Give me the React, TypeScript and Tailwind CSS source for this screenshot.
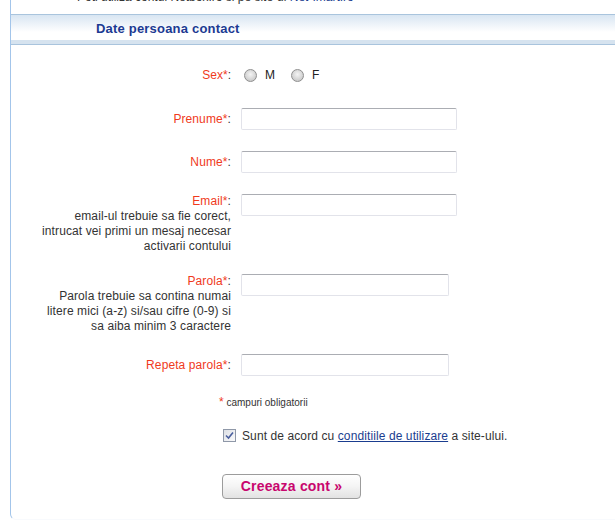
type FieldProps = {
  label: string;
  help?: string[];
  width: string;
};

function Req({ label }: { label: string }) {
  return (
    <span>
      <span className="text-[#f03a1c]">{label}*</span>
      <span className="text-[#333]">:</span>
    </span>
  );
}

function TextRow({ label, help, width }: FieldProps) {
  return (
    <div className={`flex ${help ? "items-start" : "items-center"}`}>
      <div className="w-[200px] shrink-0 text-right leading-[15px] tracking-[0.1px] text-[#333]">
        <div>
          <Req label={label} />
        </div>
        {help?.map((line) => (
          <div key={line}>{line}</div>
        ))}
      </div>
      <input
        type="text"
        className={`ml-[10px] h-[22px] ${width} rounded-[2px] border border-[#e2e3ea] border-t-[#abadb3] bg-white outline-none`}
      />
    </div>
  );
}

function Radio({ label }: { label: string }) {
  return (
    <label className="flex items-center">
      <span className="h-[13px] w-[13px] rounded-full border border-[#8f8f8f] bg-[radial-gradient(circle_at_50%_40%,#f4f4f4_0%,#d6d6d6_55%,#bdbdbd_100%)]" />
      <span className="ml-[8px] text-[#222]">{label}</span>
    </label>
  );
}

export default function App() {
  return (
    <div className="h-[522px] w-[615px] overflow-hidden bg-white font-['Liberation_Sans',Arial,sans-serif] text-[12px]">
      <div className="ml-[10px] h-[520px] rounded-bl-[6px] border-b border-l border-b-[#f8fafd] border-l-[#a3c5ea]">
        <div className="h-[14px] overflow-hidden pl-[66px]">
          <p className="mt-[-10px] leading-[15px] text-[#333]">
            Poti utiliza contul Netbox.ro si pe site-ul{" "}
            <span className="text-[#1a3d8f]">Net-Imart.ro</span>
          </p>
        </div>

        <div className="flex h-[31px] items-center border-y border-[#a9c4dd] bg-[linear-gradient(to_bottom,#d8e5f2_0px,#ffffff_17px,#ffffff_25px,#d6e3ef_25px,#d6e3ef_29px)] pl-[85px]">
          <h2 className="mt-[-1px] text-[13px] font-bold tracking-[0.2px] text-[#1c3a92]">Date persoana contact</h2>
        </div>

        <div className="pl-[20px]">
          <div className="mt-[22px] flex h-[16px] items-center">
            <div className="w-[200px] text-right">
              <Req label="Sex" />
            </div>
            <div className="ml-[13px] flex items-center gap-[16px]">
              <Radio label="M" />
              <Radio label="F" />
            </div>
          </div>

          <div className="mt-[25px]">
            <TextRow label="Prenume" width="w-[216px]" />
          </div>
          <div className="mt-[21px]">
            <TextRow label="Nume" width="w-[216px]" />
          </div>
          <div className="mt-[21px]">
            <TextRow
              label="Email"
              width="w-[216px]"
              help={[
                "email-ul trebuie sa fie corect,",
                "intrucat vei primi un mesaj necesar",
                "activarii contului",
              ]}
            />
          </div>
          <div className="mt-[20px]">
            <TextRow
              label="Parola"
              width="w-[208px]"
              help={[
                "Parola trebuie sa contina numai",
                "litere mici (a-z) si/sau cifre (0-9) si",
                "sa aiba minim 3 caractere",
              ]}
            />
          </div>
          <div className="mt-[20px]">
            <TextRow label="Repeta parola" width="w-[208px]" />
          </div>
        </div>

        <p className="mt-[20px] pl-[208px] text-[10px] leading-[12px] text-[#333]">
          <span className="text-[12px] text-[#f03a1c]">*</span> campuri obligatorii
        </p>

        <div className="mt-[19px] flex h-[15px] items-center pl-[212px]">
          <span className="flex h-[13px] w-[13px] items-center justify-center border border-[#8f98a8] bg-[linear-gradient(to_bottom_right,#dcdfe4,#fbfbfc)]">
            <svg width="9" height="9" viewBox="0 0 9 9">
              <path d="M1 4.5 L3.5 7 L8 1.5" fill="none" stroke="#4a5f9e" strokeWidth="1.6" />
            </svg>
          </span>
          <span className="ml-[6px] tracking-[0.1px] text-[#333]">
            Sunt de acord cu{" "}
            <a className="text-[#1a3d8f] underline">conditiile de utilizare</a> a site-ului.
          </span>
        </div>

        <div className="mt-[31px] pl-[211px]">
          <button
            type="button"
            className="h-[25px] w-[139px] rounded-[4px] border border-[#9c9c9c] bg-[linear-gradient(to_bottom,#ffffff,#f4f4f4_50%,#e2e2e2)] text-[14px] font-bold tracking-[0.2px] text-[#c8066e]"
          >
            Creeaza cont »
          </button>
        </div>
      </div>
    </div>
  );
}
